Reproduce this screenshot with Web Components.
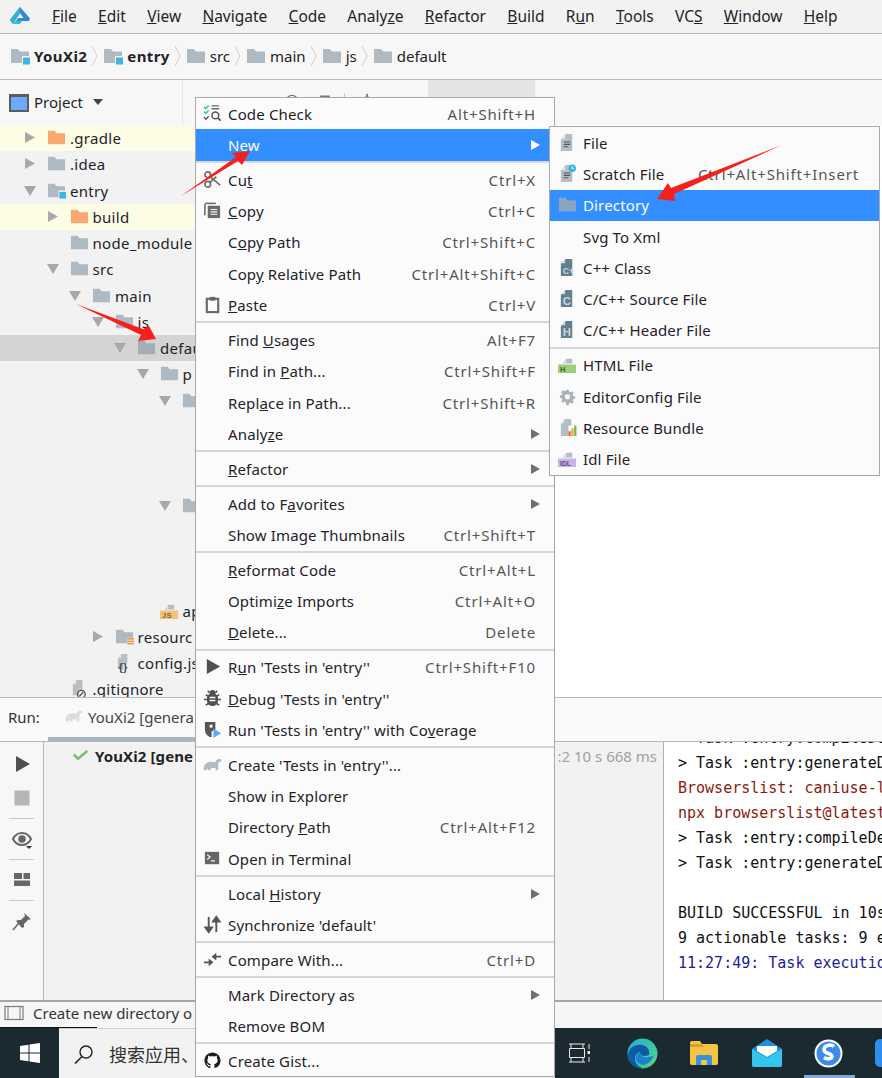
<!DOCTYPE html>
<html lang="en">
<head>
<meta charset="utf-8">
<title>DevEco Studio</title>
<style>
    html, body { margin: 0; height: 100%; overflow: hidden; background: #fff; }
    body { font: 15px "Noto Sans", "Noto Sans CJK SC", sans-serif; color: #1f2328; }
</style>
</head>
<body>
<ide-app>
    <ide-menubar slot="top"></ide-menubar>
    <ide-breadcrumbs slot="top"></ide-breadcrumbs>

    <ide-project-panel slot="left">
        <tree-row depth="0" arrow="right" icon="folder-orange" tone="ignored">.gradle</tree-row>
        <tree-row depth="0" arrow="right" icon="folder">.idea</tree-row>
        <tree-row depth="0" arrow="down" icon="folder-module">entry</tree-row>
        <tree-row depth="1" arrow="right" icon="folder-orange" tone="ignored">build</tree-row>
        <tree-row depth="1" icon="folder">node_module</tree-row>
        <tree-row depth="1" arrow="down" icon="folder">src</tree-row>
        <tree-row depth="2" arrow="down" icon="folder">main</tree-row>
        <tree-row depth="3" arrow="down" icon="folder">js</tree-row>
        <tree-row depth="4" arrow="down" icon="folder-dark" tone="selected">defau</tree-row>
        <tree-row depth="5" arrow="down" icon="folder">p</tree-row>
        <tree-row depth="6" arrow="down" icon="folder"></tree-row>
        <tree-row></tree-row>
        <tree-row></tree-row>
        <tree-row></tree-row>
        <tree-row depth="6" arrow="down" icon="folder"></tree-row>
        <tree-row></tree-row>
        <tree-row></tree-row>
        <tree-row></tree-row>
        <tree-row depth="5" icon="file-js">ap</tree-row>
        <tree-row depth="3" arrow="right" icon="folder-res">resourc</tree-row>
        <tree-row depth="3" icon="file-json">config.js</tree-row>
        <tree-row depth="1" icon="file-git">.gitignore</tree-row>
    </ide-project-panel>

    <ide-run-panel slot="bottom">
        <console-line>&gt; Task :entry:compileDe</console-line>
        <console-line>&gt; Task :entry:generateD</console-line>
        <console-line tone="warn">Browserslist: caniuse-l</console-line>
        <console-line tone="warn">npx browserslist@latest</console-line>
        <console-line>&gt; Task :entry:compileDe</console-line>
        <console-line>&gt; Task :entry:generateD</console-line>
        <console-line></console-line>
        <console-line>BUILD SUCCESSFUL in 10s</console-line>
        <console-line>9 actionable tasks: 9 e</console-line>
        <console-line tone="info">11:27:49: Task executio</console-line>
    </ide-run-panel>
    <ide-status-bar slot="bottom">Create new directory o</ide-status-bar>
    <ide-taskbar slot="bottom"></ide-taskbar>
</ide-app>

<context-menu style="left:195px;top:97px;width:358px;--lead:7px;--trail:18px;--gap:6px">
    <menu-item icon="codecheck" shortcut="Alt+Shift+H">Code Check</menu-item>
    <menu-item selected submenu>New</menu-item>
    <menu-sep></menu-sep>
    <menu-item icon="cut" shortcut="Ctrl+X">Cu<u>t</u></menu-item>
    <menu-item icon="copy" shortcut="Ctrl+C"><u>C</u>opy</menu-item>
    <menu-item shortcut="Ctrl+Shift+C">C<u>o</u>py Path</menu-item>
    <menu-item shortcut="Ctrl+Alt+Shift+C">Cop<u>y</u> Relative Path</menu-item>
    <menu-item icon="paste" shortcut="Ctrl+V"><u>P</u>aste</menu-item>
    <menu-sep></menu-sep>
    <menu-item shortcut="Alt+F7">Find <u>U</u>sages</menu-item>
    <menu-item shortcut="Ctrl+Shift+F">Find in <u>P</u>ath...</menu-item>
    <menu-item shortcut="Ctrl+Shift+R">Repl<u>a</u>ce in Path...</menu-item>
    <menu-item submenu>Analy<u>z</u>e</menu-item>
    <menu-sep></menu-sep>
    <menu-item submenu><u>R</u>efactor</menu-item>
    <menu-sep></menu-sep>
    <menu-item submenu>Add to F<u>a</u>vorites</menu-item>
    <menu-item shortcut="Ctrl+Shift+T">Show Image Thumbnails</menu-item>
    <menu-sep></menu-sep>
    <menu-item shortcut="Ctrl+Alt+L"><u>R</u>eformat Code</menu-item>
    <menu-item shortcut="Ctrl+Alt+O">Optimi<u>z</u>e Imports</menu-item>
    <menu-item shortcut="Delete"><u>D</u>elete...</menu-item>
    <menu-sep></menu-sep>
    <menu-item icon="run" shortcut="Ctrl+Shift+F10">R<u>u</u>n 'Tests in 'entry''</menu-item>
    <menu-item icon="bug"><u>D</u>ebug 'Tests in 'entry''</menu-item>
    <menu-item icon="coverage">Run 'Tests in 'entry'' with Co<u>v</u>erage</menu-item>
    <menu-sep></menu-sep>
    <menu-item icon="gradle">Create 'Tests in 'entry''...</menu-item>
    <menu-item>Show in Explorer</menu-item>
    <menu-item shortcut="Ctrl+Alt+F12">Directory <u>P</u>ath</menu-item>
    <menu-item icon="terminal">Open in Terminal</menu-item>
    <menu-sep></menu-sep>
    <menu-item submenu>Local <u>H</u>istory</menu-item>
    <menu-item icon="sync">Synchronize 'default'</menu-item>
    <menu-sep></menu-sep>
    <menu-item icon="compare" shortcut="Ctrl+D">Compare With...</menu-item>
    <menu-sep></menu-sep>
    <menu-item submenu>Mark Directory as</menu-item>
    <menu-item>Remove BOM</menu-item>
    <menu-sep></menu-sep>
    <menu-item icon="github">Create Gist...</menu-item>
</context-menu>

<context-menu style="left:549px;top:126px;width:329px;--lead:8px;--trail:20px;--gap:6px">
    <menu-item icon="file">File</menu-item>
    <menu-item icon="scratch" shortcut="Ctrl+Alt+Shift+Insert">Scratch File</menu-item>
    <menu-item icon="folder-selected" selected>Directory</menu-item>
    <menu-item>Svg To Xml</menu-item>
    <menu-item icon="cpp">C++ Class</menu-item>
    <menu-item icon="csrc">C/C++ Source File</menu-item>
    <menu-item icon="chdr">C/C++ Header File</menu-item>
    <menu-sep></menu-sep>
    <menu-item icon="html">HTML File</menu-item>
    <menu-item icon="gear">EditorConfig File</menu-item>
    <menu-item icon="bundle">Resource Bundle</menu-item>
    <menu-item icon="idl">Idl File</menu-item>
</context-menu>

<red-arrows></red-arrows>

<script>
const page = '<path d="M3 7l5-6h7v18H3z" fill="#b5bec5"/><path d="M3 6.5L7.5 1v5.5z" fill="#dfe2e4"/>';
const lines = '<path d="M6 9.5h7M6 12h7M6 14.5h5" stroke="#4f5559" stroke-width="1.2"/>';
const label = (txt, fill, ink, size) => '<path d="M5 9l4-5h6v5z" fill="#b5bec5"/><path d="M5 8.5L8.5 4v4.5z" fill="#dfe2e4"/><rect x="0" y="10" width="19" height="9" fill="' + fill + '"/><text x="2" y="18" font-family="Liberation Sans, sans-serif" font-weight="700" font-size="' + size + '" fill="' + ink + '">' + txt + '</text>';
const darkpage = (txt) => '<path d="M3 6l5-5h7v18H3z" fill="#62808e"/><path d="M3 5.5L7.5 1v4.5z" fill="#d4dbdf"/><text x="5" y="17" font-family="Liberation Sans, sans-serif" font-weight="700" font-size="' + (txt.length > 1 ? 9 : 12) + '" fill="#c7d6dc">' + txt + '</text>';
const folder = (c) => '<path d="M1 3h7l2 2.4h9V17H1z" fill="' + c + '"/>';
const moduleFolder = '<path d="M1 3h7l2 2.4h9V10h-7v7H1z" fill="#afb9c1"/><rect x="13" y="11.5" width="7" height="7" fill="#3fb5e3"/>';
const elephant = (c) => '<path d="M1 16C0 11 3 7 8 7c2 0 3 .5 5 .5C14 5 16 4 17.500 4c1.800 0 2.500 1.800 1.500 3-.5.500-1.500 0-2 0-1 1-1 4-1 9h-2.500l-.5-2.500c-1.500.7-3 .7-4.500 0L8 16H5.500c0-1-.3-1.500-.8-2L4 16z" fill="' + c + '"/>';

const ICONS = {
    'folder': folder('#afb9c1'),
    'folder-dark': folder('#a3adb5'),
    'folder-selected': folder('#8aa4c2'),
    'folder-orange': folder('#f9a872'),
    'folder-module': moduleFolder,
    'folder-res': '<path d="M1 3h7l2 2.4h9v6h-6V17H1z" fill="#afb9c1"/><path d="M13 12.5h7M13 15h7M13 17.5h7" stroke="#e2a34a" stroke-width="1.6"/>',
    'file-js': label('JS', '#f4c274', '#7a6a48', 8),
    'file-json': '<path d="M3 6l4-5h6v10H9v6H3z" fill="#b5bec5"/><path d="M3 5.5L6.5 1v4.5z" fill="#dfe2e4"/><text x="4" y="19" font-family="Liberation Sans, sans-serif" font-size="11" font-weight="700" fill="#444">{}</text>',
    'file-git': '<path d="M3 6l4-5h6v10H9v6H3z" fill="#b5bec5"/><path d="M3 5.5L6.5 1v4.5z" fill="#dfe2e4"/><circle cx="12" cy="16" r="4" fill="none" stroke="#444" stroke-width="1.3"/><path d="M10 18l4-4" stroke="#444" stroke-width="1.3"/>',
    'file': page + lines,
    'scratch': page + lines + '<circle cx="15" cy="4.5" r="4" fill="#3fb5e3"/><path d="M15 2.5v2.4h1.6" stroke="#fff" fill="none"/>',
    'cpp': darkpage('C+'),
    'csrc': darkpage('C'),
    'chdr': darkpage('H'),
    'html': label('H', '#9dce7c', '#3c6b2a', 8),
    'idl': label('IDL', '#c9b2f0', '#55506e', 7),
    'gear': '<path d="M8.5 2h3l.5 2.4 1.7.7 2.1-1.3 2 2.1-1.3 2 .7 1.7 2.3.5v3l-2.3.5-.7 1.7 1.3 2-2 2-2.1-1.2-1.7.7-.5 2.4h-3L8 17.7l-1.7-.7-2.1 1.2-2-2 1.3-2-.7-1.7L.5 12V9l2.3-.5.7-1.7-1.3-2 2-2.1 2.1 1.3 1.7-.7z" transform="translate(1.5 1.2) scale(.85)" fill="#aab2b8"/><circle cx="10" cy="10.2" r="2.7" fill="#fbfbfb"/>',
    'bundle': '<path d="M3 6l4-5h7v7h-3v11H3z" fill="#b5bec5"/><path d="M3 5.5L6.5 1v4.5z" fill="#dfe2e4"/><rect x="11" y="14" width="2.4" height="5" fill="#e8663a"/><rect x="14" y="11" width="2.4" height="8" fill="#f0a63a"/><rect x="17" y="8" width="2.4" height="11" fill="#7cb45a"/>',
    'codecheck': '<path d="M1 3l2 2 3-3.5M1 8l2 2 3-3.5" stroke="#39c78a" stroke-width="1.6" fill="none"/><path d="M1 14l2 2 3-3" stroke="#555" stroke-width="1.5" fill="none"/><path d="M9 2h8M9 5h8" stroke="#6b6b6b" stroke-width="1.4"/><circle cx="13" cy="12" r="3.6" fill="none" stroke="#555" stroke-width="1.6"/><path d="M15.5 14.6l3 3" stroke="#555" stroke-width="1.9"/>',
    'cut': '<circle cx="5" cy="5" r="3" fill="none" stroke="#6e6e6e" stroke-width="1.8"/><circle cx="5" cy="15" r="3" fill="none" stroke="#6e6e6e" stroke-width="1.8"/><path d="M7 6.5L18 16M7 13.5L14 7" stroke="#6e6e6e" stroke-width="1.8"/>',
    'copy': '<path d="M2 3v12" stroke="#666" stroke-width="1.6"/><path d="M2.5 2.5h11" stroke="#666" stroke-width="1.6"/><rect x="5" y="5" width="13" height="13" fill="#6b6b6b"/><path d="M8 9h7M8 11.5h7M8 14h7" stroke="#fbfbfb" stroke-width="1.2"/>',
    'paste': '<rect x="4" y="4" width="12" height="14" fill="none" stroke="#666" stroke-width="2.2"/><rect x="7" y="2" width="6" height="4" fill="#666"/>',
    'run': '<path d="M4 2l14 8-14 8z" fill="#505050"/>',
    'bug': '<ellipse cx="10" cy="11" rx="6" ry="7" fill="#505050"/><circle cx="10" cy="4" r="3" fill="#505050"/><path d="M3 6l3 2M17 6l-3 2M1 11h4M19 11h-4M3 17l3-2M17 17l-3-2M5 2l2 2M15 2l-2 2" stroke="#505050" stroke-width="1.6"/><path d="M7 9h6M7 12h6" stroke="#fbfbfb" stroke-width="1.6"/>',
    'coverage': '<path d="M2 2h11v8l-4 2v6H7c-3-2-5-4-5-8z" fill="#555"/><path d="M7 5h3v3H7z" fill="#fbfbfb"/><path d="M11 9l8 5-8 5z" fill="#5fa8ff"/>',
    'gradle': elephant('#b4bdc4'),
    'terminal': '<rect x="2" y="3" width="15" height="13" fill="#666"/><path d="M4.500 6l3 2.500-3 2.500M8.500 12.500h4" stroke="#fff" stroke-width="1.2" fill="none"/>',
    'sync': '<path d="M6 2v15M2.500 13L6 18l3.500-5z" stroke="#555" stroke-width="2" fill="#555"/><path d="M14 18V3M10.500 7L14 2l3.500 5z" stroke="#555" stroke-width="2" fill="#555"/>',
    'compare': '<path d="M1 13h7M12 7h7" stroke="#555" stroke-width="2"/><path d="M6 9v8l5-4zM14 3v8L9 7z" fill="#555"/>',
    'github': '<path transform="translate(1.500 1.500) scale(1.060)" fill="#1f1f1f" d="M8 0C3.580 0 0 3.580 0 8c0 3.540 2.290 6.530 5.470 7.590.4.070.55-.17.55-.38 0-.19-.01-.82-.01-1.490-2.010.37-2.530-.49-2.690-.94-.09-.23-.48-.94-.82-1.130-.28-.15-.68-.52-.01-.53.63-.01 1.080.58 1.230.82.720 1.210 1.870.87 2.330.66.070-.52.280-.87.510-1.070-1.780-.2-3.640-.89-3.640-3.950 0-.87.310-1.590.820-2.150-.08-.2-.36-1.020.080-2.120 0 0 .670-.21 2.200.82.640-.18 1.320-.27 2-.27.680 0 1.360.090 2 .27 1.530-1.040 2.200-.82 2.200-.82.440 1.100.160 1.920.080 2.120.510.560.820 1.270.820 2.150 0 3.070-1.870 3.750-3.650 3.950.290.250.540.730.540 1.480 0 1.070-.01 1.930-.01 2.200 0 .210.150.460.550.380A8.013 8.013 0 0016 8c0-4.420-3.580-8-8-8z"/>',
    'eye': '<path d="M1 10c2-4 5.500-6 9-6s7 2 9 6c-2 4-5.500 6-9 6s-7-2-9-6z" fill="none" stroke="#666" stroke-width="2"/><circle cx="10" cy="10" r="3.800" fill="#666"/><path d="M14 17h6l-3 3z" fill="#333"/>',
    'layout': '<path d="M2 3h8v6H2zM11.500 3H18v6h-6.500zM2 10.500h16V16H2z" fill="#666"/>',
    'pin': '<path d="M12 2l7 6-3 1-4 4 0 3-2 1-6-7 2-1h3l4-4z" fill="#666"/><path d="M7 12l-6 7" stroke="#666" stroke-width="1.500"/>',
    'stop': '<rect x="2.500" y="2.500" width="15" height="15" fill="#b5b5b5"/>',
    'check': '<path d="M2 10l5 5 11-9" stroke="#74c46d" stroke-width="3" fill="none"/>',
    'tool-circle': '<circle cx="10" cy="10" r="7" fill="none" stroke="#777" stroke-width="1.800"/><path d="M10 5v10M5 10h10" stroke="#777" stroke-width="1.400"/>',
    'tool-merge': '<path d="M4 4h12M10 6v10M6 12l4 4 4-4" stroke="#777" stroke-width="2" fill="none"/>',
    'tool-gear': '<circle cx="10" cy="10" r="6" fill="#888"/><path d="M10 1v18M1 10h18" stroke="#888" stroke-width="2.500"/>',
    'tab-gradle': elephant('#dadee1'),
    'status': '<rect x="1" y="3.500" width="18" height="13" fill="none" stroke="#7b7b7b" stroke-width="1.200"/><path d="M4 4v12M16 4v12" stroke="#7b7b7b" stroke-width="1"/>'
};

class IdeIcon extends HTMLElement {
    connectedCallback() {
        const size = this.getAttribute('size') || 20;
        const name = this.getAttribute('name');
        this.attachShadow({ mode: 'open' }).innerHTML = `
            <style>
                :host { display: block; width: ${size}px; height: ${size}px; flex: none; }
                svg { display: block; width: 100%; height: 100%; overflow: visible; }
            </style>
            <svg viewBox="0 0 20 20">${ICONS[name] || ''}</svg>`;
    }
}

class IdeApp extends HTMLElement {
    constructor() {
        super();
        this.attachShadow({ mode: 'open' }).innerHTML = `
            <style>
                :host { display: flex; flex-direction: column; width: 882px; height: 1078px; overflow: hidden; background: #fff; }
                .work { display: flex; flex: 1; min-height: 0; }
                .tabs { height: 45px; background: #f7f7f7; }
                .tabs i { display: block; width: 107px; height: 100%; background: #e4e4e4; }
                .editor { flex: 1; min-width: 0; background: #fff; }
            </style>
            <slot name="top"></slot>
            <div class="work">
                <slot name="left"></slot>
                <div class="editor"><div class="tabs"><i></i></div></div>
            </div>
            <slot name="bottom"></slot>`;
    }
}

class IdeMenubar extends HTMLElement {
    constructor() {
        super();
        const items = ['<u>F</u>ile', '<u>E</u>dit', '<u>V</u>iew', '<u>N</u>avigate', '<u>C</u>ode', 'Analy<u>z</u>e', '<u>R</u>efactor', '<u>B</u>uild', 'R<u>u</u>n', '<u>T</u>ools', 'VC<u>S</u>', '<u>W</u>indow', '<u>H</u>elp'];
        this.attachShadow({ mode: 'open' }).innerHTML = `
            <style>
                :host { display: flex; align-items: center; gap: 21.300px; height: 31px; padding: 0 0 2px 10px; background: #f2f2f2; border-bottom: 1px solid #b9b9b9; white-space: nowrap; overflow: hidden; font-size: 15.500px; }
                svg { width: 20px; height: 17px; margin-right: .700px; flex: none; }
            </style>
            <svg viewBox="0 0 20 17">
                <path d="M10 0L0 13l3 4 7-11 3.500 5H8l-2 3h13l1-2.500z" fill="#3389d8"/>
                <path d="M10 0L0 13l3 4 7-11z" fill="#2fb0cf"/>
                <path d="M6 14h6l-2 3H3z" fill="#2fc0c8"/>
            </svg>
            ${items.map(i => `<span>${i}</span>`).join('')}`;
    }
}

class IdeBreadcrumbs extends HTMLElement {
    constructor() {
        super();
        const crumbs = [['folder-module', 'YouXi2', 1], ['folder-module', 'entry', 1], ['folder', 'src'], ['folder', 'main'], ['folder', 'js'], ['folder', 'default']];
        const chev = '<svg class="chev" viewBox="0 0 7 20"><path d="M1 0l5 10-5 10" fill="none" stroke="#cfcfcf"/></svg>';
        this.attachShadow({ mode: 'open' }).innerHTML = `
            <style>
                :host { display: flex; align-items: center; height: 43px; padding: 0 0 2px 10px; background: #f7f7f7; border-bottom: 1px solid #b9b9b9; white-space: nowrap; }
                ide-icon { margin-right: 4px; }
                b { font-weight: 700; letter-spacing: .4px; }
                .chev { width: 7px; height: 20px; margin: 0 5px 0 4px; flex: none; }
            </style>
            ${crumbs.map(([icon, text, bold]) => `<ide-icon name="${icon}" size="20"></ide-icon>${bold ? `<b>${text}</b>` : `<span>${text}</span>`}`).join(chev)}`;
    }
}

class IdeProjectPanel extends HTMLElement {
    constructor() {
        super();
        this.attachShadow({ mode: 'open' }).innerHTML = `
            <style>
                :host { display: flex; flex-direction: column; width: 428px; flex: none; background: #f2f2f2; overflow: hidden; }
                header { display: flex; align-items: center; height: 43px; padding: 0 0 2px 9px; background: #f7f7f7; flex: none; }
                .win { width: 20px; height: 18px; box-sizing: border-box; border: 2px solid #5c5c5c; border-top-width: 3px; background: #6ba9ff; margin-right: 5px; margin-top: 2px; }
                .drop { margin-left: 10px; width: 0; height: 0; border: 5.500px solid transparent; border-top: 6px solid #444; border-bottom: 0; }
                .rule { width: 1px; height: 45px; margin-left: 79px; background: #e8e8e8; align-self: flex-start; }
                .tools { display: flex; align-items: flex-start; align-self: flex-start; margin-left: 101px; padding-top: 13px; gap: 14px; }
                .tools i { width: 1px; height: 20px; background: #c8c8c8; }
                .tools ide-icon:nth-child(2) { margin-left: 3px; margin-right: -3px; }
                .tree { flex: 1; min-height: 0; overflow: hidden; }
            </style>
            <header>
                <span class="win"></span><span>Project</span><span class="drop"></span><span class="rule"></span>
                <div class="tools">
                    <ide-icon name="tool-circle" size="16"></ide-icon>
                    <ide-icon name="tool-merge" size="16"></ide-icon>
                    <i></i>
                    <ide-icon name="tool-gear" size="16"></ide-icon>
                </div>
            </header>
            <div class="tree"><slot></slot></div>`;
    }
}

class TreeRow extends HTMLElement {
    connectedCallback() {
        const depth = Number(this.getAttribute('depth') || 0);
        const arrow = this.getAttribute('arrow');
        const icon = this.getAttribute('icon');
        const glyph = arrow === 'right' ? '<path d="M1 0l10 5.500L1 11z"/>' : arrow === 'down' ? '<path d="M0 1h12L6 11z"/>' : '';
        this.attachShadow({ mode: 'open' }).innerHTML = `
            <style>
                :host { display: flex; align-items: center; height: 26.250px; padding-left: ${24 + depth * 22.500}px; box-sizing: border-box; white-space: nowrap; letter-spacing: .3px; }
                :host([tone="ignored"]) { background: #fdfde6; }
                :host([tone="selected"]) { background: #d4d4d4; }
                svg { width: 12px; height: 12px; flex: none; margin-right: 11px; fill: #a8a8a8; }
                ide-icon { margin-right: 4px; margin-top: -1px; }
            </style>
            <svg viewBox="0 0 12 12">${glyph}</svg>
            ${icon ? `<ide-icon name="${icon}" size="19"></ide-icon>` : ''}
            <slot></slot>`;
    }
}

class IdeRunPanel extends HTMLElement {
    constructor() {
        super();
        this.attachShadow({ mode: 'open' }).innerHTML = `
            <style>
                :host { display: block; flex: none; height: 303px; border-top: 1px solid #b9b9b9; box-sizing: border-box; white-space: nowrap; }
                .tabs { display: flex; height: 44px; box-sizing: border-box; background: #f9f9f9; border-bottom: 1px solid #b9b9b9; }
                .title { width: 48px; padding: 9px 0 0 8px; box-sizing: border-box; color: #333; }
                .tab { display: flex; gap: 5px; align-items: flex-start; padding: 9px 0 0 17px; width: 147px; height: 43px; box-sizing: border-box; border-bottom: 4px solid #a9b4c6; color: #444; }
                .body { display: flex; height: 258px; }
                .bar { width: 44px; flex: none; box-sizing: border-box; border-right: 1px solid #b9b9b9; background: #f7f7f7; display: flex; flex-direction: column; align-items: center; padding-top: 11.500px; }
                .bar ide-icon { margin-bottom: 10px; }
                .bar ide-icon:first-child { margin-bottom: 14px; }
                .bar i { width: 25px; height: 1px; background: #c9c9c9; margin-bottom: 10px; }
                .tests { width: 620px; flex: none; box-sizing: border-box; background: #f2f2f2; border-right: 1px solid #b0b0b0; display: flex; align-items: flex-start; padding: 4px 6px 0 28px; }
                .tests b { margin-left: 6px; letter-spacing: .1px; }
                .clip { margin-left: auto; width: 21px; overflow: hidden; direction: rtl; color: #a8a8a8; }
                .time { margin-left: 4px; color: #a0a0a0; }
                .console { flex: 1; min-width: 0; overflow: hidden; background: #fff; padding-left: 14px; }
                .lines { margin-top: -16px; }
            </style>
            <div class="tabs">
                <span class="title">Run:</span>
                <span class="tab"><ide-icon name="tab-gradle" size="18"></ide-icon>YouXi2 [genera</span>
            </div>
            <div class="body">
                <div class="bar">
                    <ide-icon name="run" size="20"></ide-icon>
                    <ide-icon name="stop" size="20"></ide-icon>
                    <i></i>
                    <ide-icon name="eye" size="20"></ide-icon>
                    <i></i>
                    <ide-icon name="layout" size="20"></ide-icon>
                    <i></i>
                    <ide-icon name="pin" size="20"></ide-icon>
                </div>
                <div class="tests">
                    <ide-icon name="check" size="17"></ide-icon><b>YouXi2 [gene</b>
                    <span class="clip">1:2</span><span class="time">10 s 668 ms</span>
                </div>
                <div class="console"><div class="lines"><slot></slot></div></div>
            </div>`;
    }
}

class ConsoleLine extends HTMLElement {
    constructor() {
        super();
        this.attachShadow({ mode: 'open' }).innerHTML = `
            <style>
                :host { display: block; height: 25px; font: 15px/25px "DejaVu Sans Mono", monospace; color: #111; white-space: nowrap; }
                :host([tone="warn"]) { color: #8b1a10; }
                :host([tone="info"]) { color: #1c1c9c; }
            </style>
            <slot></slot>`;
    }
}

class IdeStatusBar extends HTMLElement {
    constructor() {
        super();
        this.attachShadow({ mode: 'open' }).innerHTML = `
            <style>
                :host { display: flex; align-items: center; height: 28px; flex: none; box-sizing: border-box; padding: 0 0 4px 4px; background: #f6f6f6; border-top: 2px solid #a6a6a6; white-space: nowrap; color: #333; }
                ide-icon { margin-right: 9px; }
            </style>
            <ide-icon name="status" size="20"></ide-icon><slot></slot>`;
    }
}

class IdeTaskbar extends HTMLElement {
    constructor() {
        super();
        this.attachShadow({ mode: 'open' }).innerHTML = `
            <style>
                :host { display: flex; height: 50px; flex: none; background: #1a2a30; position: relative; white-space: nowrap; }
                .start { width: 59px; display: flex; align-items: center; justify-content: center; flex: none; }
                .search { width: 496px; flex: none; background: #f2f2f2; display: flex; align-items: center; padding-left: 15px; box-sizing: border-box; gap: 15px; border-top: 1px solid #cfcfcf; font: 18px "Noto Sans CJK SC", sans-serif; color: #333; }
                .apps { display: flex; align-items: center; padding-left: 13px; flex: 1; }
                svg { flex: none; display: block; }
                .active { position: absolute; left: 804px; bottom: 0; width: 51px; height: 3px; background: #7ea9d8; }
                .line { position: absolute; left: 0; top: -1px; width: 97px; height: 1px; background: #111; }
            </style>
            <span class="line"></span>
            <div class="start">
                <svg width="20" height="20" viewBox="0 0 20 20"><path d="M0 3l8.500-1.200v7.700H0zM9.500 1.600L20 0v9.500H9.500zM0 10.500h8.500v7.700L0 17zM9.500 10.500H20V20L9.500 18.400z" fill="#fff"/></svg>
            </div>
            <div class="search">
                <svg width="20" height="20" viewBox="0 0 20 20"><circle cx="12" cy="8" r="6" fill="none" stroke="#222" stroke-width="1.400"/><path d="M8 12.500L1 19.500" stroke="#222" stroke-width="1.600"/></svg>
                <span>搜索应用、</span>
            </div>
            <div class="apps">
                <svg width="22" height="20" viewBox="0 0 22 20" style="margin-right:37px"><path d="M1 1h16M1 19h16M3 1v4M15 1v4M3 15v4M15 15v4M1.500 5.500h15v9h-15zM21 1v5M21 14v5" stroke="#e8e8e8" fill="none"/><rect x="19.500" y="8" width="3" height="3" fill="#e8e8e8"/></svg>
                <svg width="31" height="31" viewBox="0 0 31 31" style="margin-right:32px">
                    <defs><linearGradient id="e1" x1="0" y1="0" x2="1" y2="1"><stop offset="0" stop-color="#1fb2d8"/><stop offset="1" stop-color="#55d67a"/></linearGradient></defs>
                    <circle cx="15.500" cy="15.500" r="15" fill="url(#e1)"/>
                    <path d="M1 17C2 8 10 6 15 7c6 1 8 6 7 10-5 2-9 1-9-3-6 1-8 11 2 16C7 31 1 25 1 17z" fill="#0c5aa8"/>
                    <path d="M13 14c0 5 5 7 12 4 4-2-2 8-8 9-5 0-9-4-8-8 .3-2 2-4 4-5z" fill="#1e7fd0"/>
                </svg>
                <svg width="28" height="24" viewBox="0 0 28 24" style="margin-right:34px">
                    <path d="M0 2a2 2 0 012-2h8l2 3h14a2 2 0 012 2v17a2 2 0 01-2 2H2a2 2 0 01-2-2z" fill="#f4c542"/>
                    <path d="M0 3h12l2 3H0z" fill="#d9a02c"/>
                    <path d="M6 24v-8a2 2 0 012-2h12a2 2 0 012 2v8h-5v-5h-6v5z" fill="#3a8fd8"/>
                </svg>
                <svg width="30" height="28" viewBox="0 0 30 28" style="margin-right:32px">
                    <path d="M0 10L15 0l15 10v16a2 2 0 01-2 2H2a2 2 0 01-2-2z" fill="#1f8fe0"/>
                    <path d="M0 10l15 9 15-9v16a2 2 0 01-2 2H2a2 2 0 01-2-2z" fill="#35c4ee"/>
                    <path d="M5 12V7h20v5l-10 6z" fill="#fff"/>
                </svg>
                <svg width="29" height="29" viewBox="0 0 29 29" style="margin-right:32px">
                    <circle cx="14.500" cy="14.500" r="14" fill="#fff"/>
                    <circle cx="14.500" cy="14.500" r="12" fill="#3d8be8"/>
                    <path d="M20 7.500c-3-2.500-10-1.500-10 3 0 5 8 3 8 7 0 2.500-5 3-8 1" fill="none" stroke="#fff" stroke-width="3.500"/>
                </svg>
                <svg width="30" height="28" viewBox="0 0 30 28"><rect width="30" height="28" rx="5" fill="#2f8ff0"/></svg>
            </div>
            <span class="active"></span>`;
    }
}

class ContextMenu extends HTMLElement {
    constructor() {
        super();
        this.attachShadow({ mode: 'open' }).innerHTML = `
            <style>
                :host { display: block; position: absolute; background: #fbfbfb; border: 1px solid #a9a9a9; white-space: nowrap; }
            </style>
            <slot></slot>`;
    }
}

class MenuItem extends HTMLElement {
    connectedCallback() {
        const icon = this.getAttribute('icon');
        const shortcut = this.getAttribute('shortcut');
        const arrow = this.hasAttribute('submenu');
        this.attachShadow({ mode: 'open' }).innerHTML = `
            <style>
                :host { display: flex; align-items: center; height: 31.300px; padding: 0 var(--trail) 0 var(--lead); box-sizing: border-box; color: #1f2328; letter-spacing: .15px; }
                :host([selected]) { background: #338fff; color: #fff; }
                .slot { width: 19px; height: 20px; flex: none; margin-right: var(--gap); }
                .key { margin-left: auto; color: #555; letter-spacing: .85px; }
                .arrow { margin-left: auto; margin-right: -4px; width: 0; height: 0; border: 5px solid transparent; border-left: 9px solid #707070; border-right: 0; }
                :host([selected]) .arrow { border-left-color: #fff; }
            </style>
            <span class="slot">${icon ? `<ide-icon name="${icon}" size="19"></ide-icon>` : ''}</span>
            <span><slot></slot></span>
            ${shortcut ? `<span class="key">${shortcut}</span>` : ''}
            ${arrow ? '<span class="arrow"></span>' : ''}`;
    }
}

class MenuSep extends HTMLElement {
    constructor() {
        super();
        this.attachShadow({ mode: 'open' }).innerHTML = `
            <style>
                :host { display: flex; align-items: center; height: 3.600px; }
                i { display: block; width: 100%; height: 2px; background: #d6d6d6; }
            </style>
            <i></i>`;
    }
}

class RedArrows extends HTMLElement {
    constructor() {
        super();
        this.attachShadow({ mode: 'open' }).innerHTML = `
            <style>
                :host { position: absolute; left: 0; top: 0; width: 882px; height: 1078px; pointer-events: none; }
                svg { display: block; }
            </style>
            <svg width="882" height="1078" fill="#f6211c">
                <polygon points="181,196 236,157 232,153 250,151 242,165 238,161"/>
                <polygon points="782,145 671,188 668,183 657,199 675,201 674,194"/>
                <polygon points="76,304 143,329 149,326 156,339 138,341 141,335"/>
            </svg>`;
    }
}

customElements.define('ide-icon', IdeIcon);
customElements.define('ide-app', IdeApp);
customElements.define('ide-menubar', IdeMenubar);
customElements.define('ide-breadcrumbs', IdeBreadcrumbs);
customElements.define('ide-project-panel', IdeProjectPanel);
customElements.define('tree-row', TreeRow);
customElements.define('ide-run-panel', IdeRunPanel);
customElements.define('console-line', ConsoleLine);
customElements.define('ide-status-bar', IdeStatusBar);
customElements.define('ide-taskbar', IdeTaskbar);
customElements.define('context-menu', ContextMenu);
customElements.define('menu-item', MenuItem);
customElements.define('menu-sep', MenuSep);
customElements.define('red-arrows', RedArrows);
</script>
</body>
</html>
